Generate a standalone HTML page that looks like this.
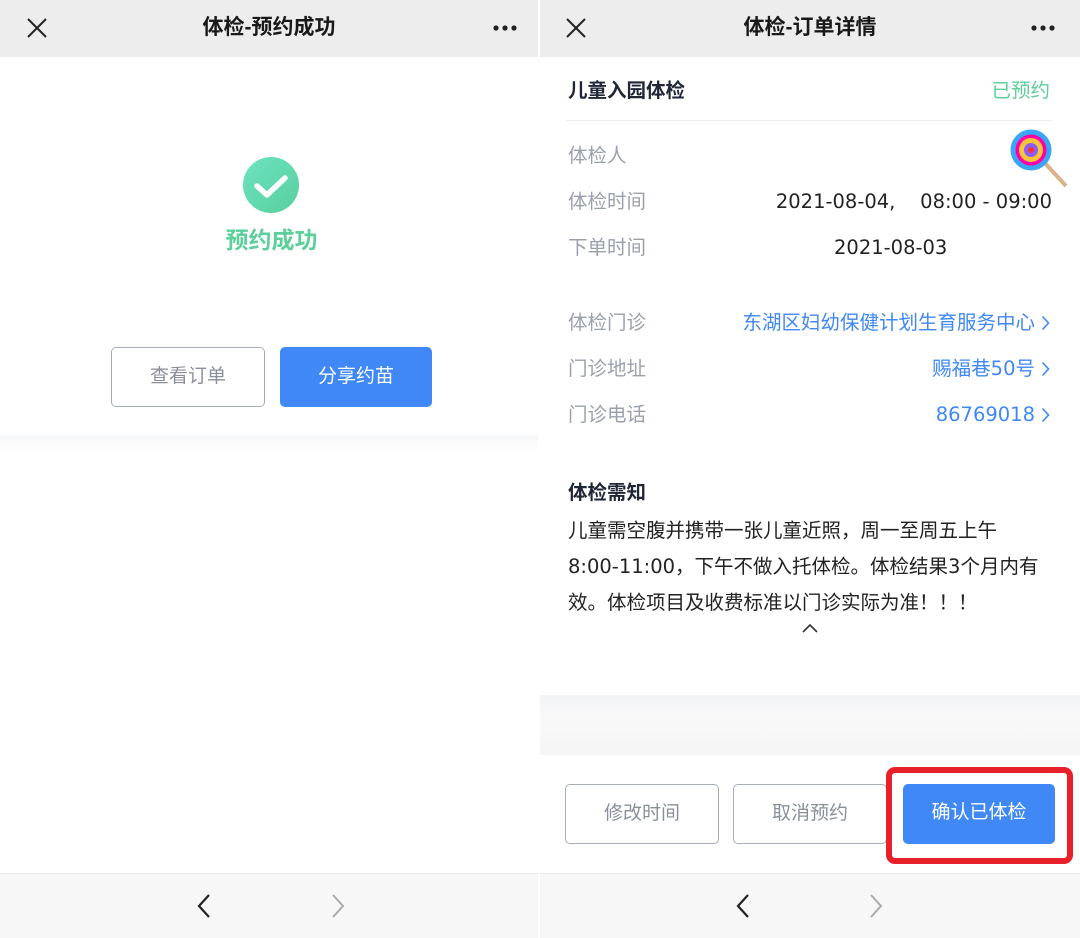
<!DOCTYPE html>
<html><head><meta charset="utf-8"><style>
*{margin:0;padding:0;box-sizing:border-box}
body{width:1080px;height:938px;position:relative;background:#fff;font-family:"Liberation Sans","Noto Sans CJK SC",sans-serif;overflow:hidden}
.abs{position:absolute}
.hdr{top:0;height:57px;background:#ededed}
.title{top:0;height:57px;line-height:56px;font-size:21px;color:#1a1a1a;text-align:center;font-weight:bold}
.nav{top:873px;height:65px;background:#f7f7f7;border-top:1px solid #e8e8e8}
.btn{border:1.5px solid #a6adb9;border-radius:5px;color:#8a909b;font-size:19px;text-align:center;background:#fff}
.btnb{background:#3f88f6;color:#fff;border-radius:5px;font-size:19px;text-align:center}
.lab{left:568px;font-size:19.5px;color:#9aa1ad;line-height:26px}
.num{font-family:"DejaVu Sans","Noto Sans CJK SC",sans-serif}
.val{right:28px;font-size:19.5px;color:#222;text-align:right;line-height:26px}
.link{right:30px;font-size:19.5px;color:#3f88f6;text-align:right;line-height:26px;display:flex;align-items:center;gap:6px}
</style></head><body>
<div class="abs hdr" style="left:0;width:538px"></div>
<svg class="abs" style="left:26px;top:17px" width="22" height="22"><path d="M2 2L20 20M20 2L2 20" stroke="#222" stroke-width="2"/></svg>
<div class="abs title" style="left:0;width:538px">体检-预约成功</div>
<svg class="abs" style="left:492px;top:24px" width="28" height="8"><circle cx="4" cy="4" r="2.6" fill="#222"/><circle cx="13" cy="4" r="2.6" fill="#222"/><circle cx="22" cy="4" r="2.6" fill="#222"/></svg>
<svg class="abs" style="left:242px;top:156px" width="58" height="58"><defs><linearGradient id="g" x1="0" y1="0" x2="1" y2="1"><stop offset="0" stop-color="#6de3c2"/><stop offset="1" stop-color="#58cf9c"/></linearGradient></defs><circle cx="29" cy="29" r="28" fill="url(#g)"/><path d="M15 30L25 39L43 22" stroke="#fff" stroke-width="5.5" fill="none" stroke-linecap="round" stroke-linejoin="round"/></svg>
<div class="abs" style="left:0;width:543px;top:221px;text-align:center;font-size:23px;color:#5ccf9a;font-weight:bold">预约成功</div>
<div class="abs btn" style="left:111px;top:347px;width:154px;height:60px;line-height:57px">查看订单</div>
<div class="abs btnb" style="left:280px;top:347px;width:152px;height:60px;line-height:60px">分享约苗</div>
<div class="abs" style="left:0;top:435px;width:538px;height:18px;background:linear-gradient(#f6f7f9,#fff)"></div>
<div class="abs nav" style="left:0;width:538px"></div>
<svg class="abs" style="left:196px;top:893px" width="16" height="26"><path d="M13 2L3 13L13 24" stroke="#222" stroke-width="2.2" fill="none"/></svg>
<svg class="abs" style="left:330px;top:893px" width="16" height="26"><path d="M3 2L13 13L3 24" stroke="#aaa" stroke-width="2" fill="none"/></svg>
<div class="abs" style="left:538px;top:0;width:2px;height:938px;background:#fff"></div>

<div class="abs hdr" style="left:540px;width:540px"></div>
<svg class="abs" style="left:565px;top:17px" width="22" height="22"><path d="M2 2L20 20M20 2L2 20" stroke="#222" stroke-width="2"/></svg>
<div class="abs title" style="left:540px;width:540px">体检-订单详情</div>
<svg class="abs" style="left:1030px;top:24px" width="28" height="8"><circle cx="4" cy="4" r="2.6" fill="#222"/><circle cx="13" cy="4" r="2.6" fill="#222"/><circle cx="22" cy="4" r="2.6" fill="#222"/></svg>
<div class="abs" style="left:568px;top:74px;font-size:19.5px;font-weight:bold;color:#1f2636">儿童入园体检</div>
<div class="abs" style="right:30px;top:74px;font-size:19.5px;color:#5ccf9a">已预约</div>
<div class="abs" style="left:566px;top:120px;width:486px;height:1px;background:#eceef1"></div>
<div class="abs lab" style="top:143px">体检人</div>
<svg class="abs" style="left:1008px;top:128px" width="64" height="64"><line x1="36" y1="34" x2="58" y2="58" stroke="#d9b28a" stroke-width="4"/><circle cx="23" cy="22" r="18" fill="#f0a" /><circle cx="23" cy="22" r="18" fill="none" stroke="#3aa6f5" stroke-width="5"/><circle cx="23" cy="22" r="12" fill="#f7c53a"/><circle cx="23" cy="22" r="7" fill="#8b5cf6"/><circle cx="23" cy="22" r="3" fill="#f33"/></svg>
<div class="abs lab" style="top:189px">体检时间</div>
<div class="abs val num" style="top:189px;white-space:pre">2021-08-04,    08:00 - 09:00</div>
<div class="abs lab" style="top:235px">下单时间</div>
<div class="abs num" style="left:834px;top:235px;font-size:19.5px;line-height:26px;color:#222">2021-08-03</div>
<div class="abs lab" style="top:310px">体检门诊</div>
<div class="abs link" style="top:310px">东湖区妇幼保健计划生育服务中心<svg width="9" height="16"><path d="M1.5 1.5L7.5 8L1.5 14.5" stroke="#3f88f6" stroke-width="1.6" fill="none"/></svg></div>
<div class="abs lab" style="top:356px">门诊地址</div>
<div class="abs link" style="top:356px"><span>赐福巷<span class="num">50</span>号</span><svg width="9" height="16"><path d="M1.5 1.5L7.5 8L1.5 14.5" stroke="#3f88f6" stroke-width="1.6" fill="none"/></svg></div>
<div class="abs lab" style="top:402px">门诊电话</div>
<div class="abs link" style="top:402px"><span class="num">86769018</span><svg width="9" height="16"><path d="M1.5 1.5L7.5 8L1.5 14.5" stroke="#3f88f6" stroke-width="1.6" fill="none"/></svg></div>
<div class="abs" style="left:568px;top:476px;font-size:19.5px;font-weight:bold;color:#1f2636">体检需知</div>
<div class="abs" style="left:568px;top:513px;width:500px;font-size:19.5px;line-height:36px;color:#222">儿童需空腹并携带一张儿童近照，周一至周五上午<br><span class="num">8:00-11:00</span>，下午不做入托体检。体检结果<span class="num">3</span>个月内有<br>效。体检项目及收费标准以门诊实际为准！！！</div>
<svg class="abs" style="left:801px;top:622px" width="18" height="12"><path d="M2 10L9 3L16 10" stroke="#333" stroke-width="1.6" fill="none"/></svg>
<div class="abs" style="left:540px;top:695px;width:540px;height:60px;background:linear-gradient(#f3f4f6,#f9f9fa 40%,#f5f5f6)"></div>
<div class="abs btn" style="left:565px;top:784px;width:154px;height:60px;line-height:57px">修改时间</div>
<div class="abs btn" style="left:733px;top:784px;width:154px;height:60px;line-height:57px">取消预约</div>
<div class="abs btnb" style="left:903px;top:784px;width:152px;height:60px;line-height:58px">确认已体检</div>
<div class="abs" style="left:886px;top:767px;width:187px;height:97px;border:6px solid #e8202a;border-radius:9px"></div>
<div class="abs nav" style="left:540px;width:540px"></div>
<svg class="abs" style="left:735px;top:893px" width="16" height="26"><path d="M13 2L3 13L13 24" stroke="#222" stroke-width="2.2" fill="none"/></svg>
<svg class="abs" style="left:868px;top:893px" width="16" height="26"><path d="M3 2L13 13L3 24" stroke="#aaa" stroke-width="2" fill="none"/></svg>
</body></html>
